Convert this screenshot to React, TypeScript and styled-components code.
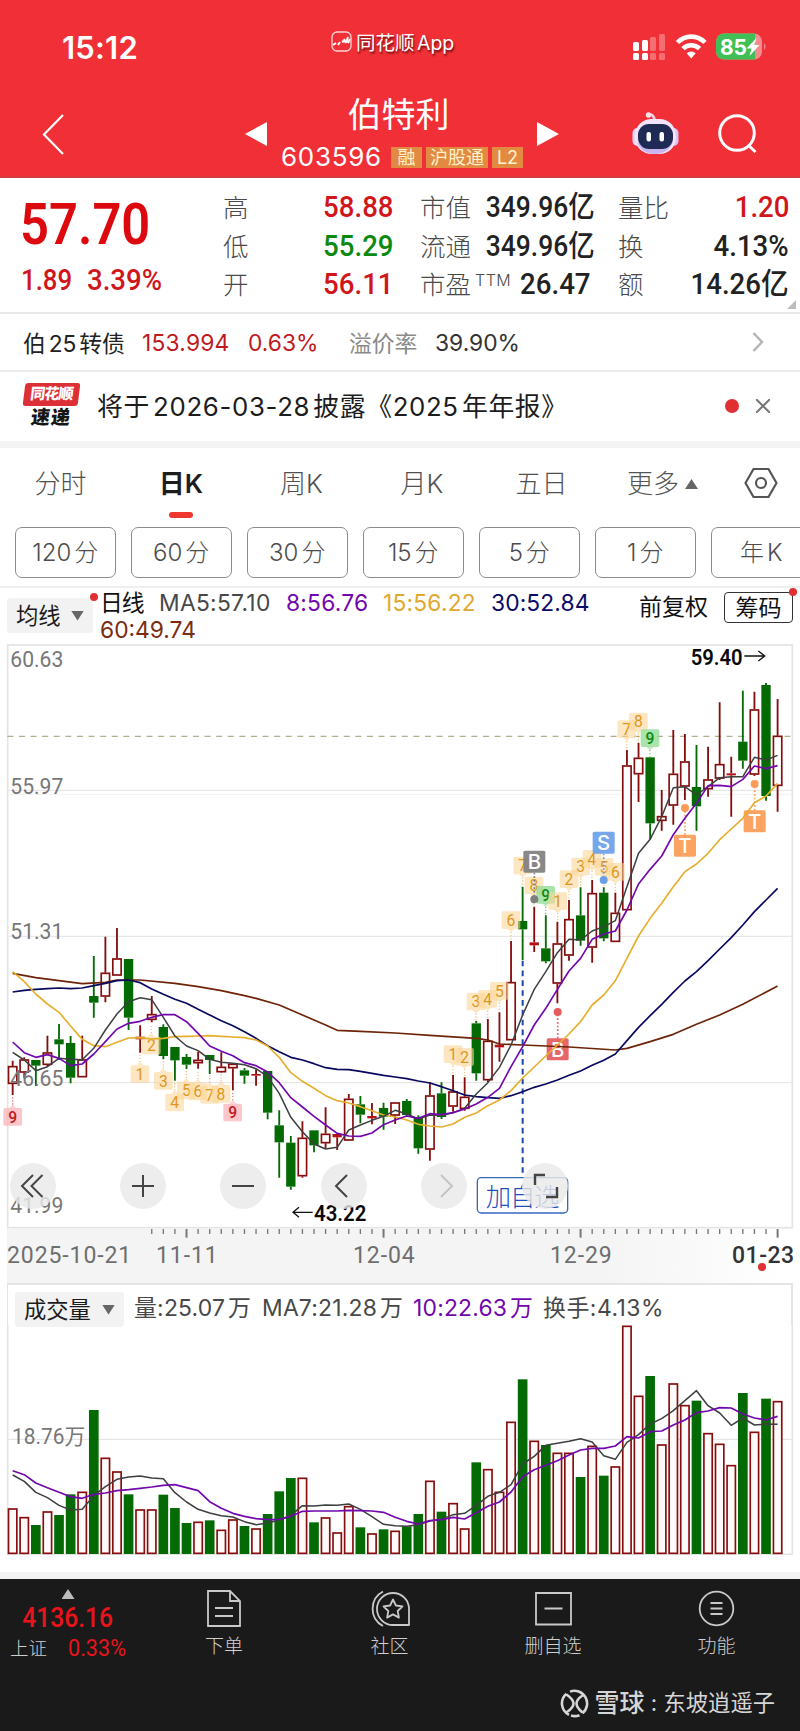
import React from "react";
import styled, { createGlobalStyle } from "styled-components";

const UI = `Inter, "Noto Sans CJK SC", sans-serif`;
const DIN = `Roboto, "Noto Sans CJK SC", sans-serif`;
const RED = "#d0161b";
const UP = "#860d0d";
const DOWN = "#046a04";

const Global = createGlobalStyle`
  * { box-sizing: border-box; }
  body { margin: 0; background: #fff; font-family: ${UI}; color: #222; text-autospace: normal; }
  svg { display: block; flex: none; text-autospace: no-autospace; }
`;

const Page = styled.main`
  width: 800px;
  height: 1731px;
  overflow: hidden;
  display: flex;
  flex-direction: column;
  white-space: nowrap;
`;

/* ---------- header ---------- */
const Header = styled.header`
  height: 178px;
  flex: none;
  background: #f12f36;
  border-bottom: 2px solid #d53a3d;
  color: #fff;
`;
const StatusBar = styled.div`
  height: 92px;
  padding: 4px 34px 0 62px;
  display: grid;
  grid-template-columns: 269px 301px 1fr;
  align-items: center;
`;
const Clock = styled.time`
  font: 600 31px/1 ${UI};
  letter-spacing: 0.2px;
  margin-top: -2px;
`;
const AppName = styled.div`
  display: flex;
  gap: 4px;
  align-items: center;
  margin-top: -13px;
  font-size: 19.5px;
  text-shadow: 1px 2px 2px rgba(70, 0, 0, 0.75);
`;
const NavBar = styled.div`
  height: 84px;
  display: grid;
  grid-template-columns: 245px 36px 248px 103px 113px 1fr;
  align-items: center;
`;
const BackSlot = styled.div`
  padding-left: 42px;
`;
const TitleBlock = styled.div`
  display: flex;
  flex-direction: column;
  height: 84px;
`;
const StockName = styled.h1`
  margin: 0;
  text-align: center;
  width: 235px;
  font: 400 34px/46px ${UI};
`;
const CodeLine = styled.div`
  display: flex;
  align-items: center;
  height: 38px;
  gap: 4px;
`;
const Code = styled.span`
  width: 106px;
  font-size: 26px;
  letter-spacing: 0.7px;
  line-height: 30px;
`;
const Badge = styled.span<{ $w: number }>`
  width: ${(p) => p.$w}px;
  height: 21px;
  margin-top: 1px;
  background: #e28a42;
  color: #fff2cf;
  font-size: 18px;
  line-height: 21px;
  text-align: center;
`;
const SearchSlot = styled.div`
  margin-left: -28px;
`;

/* ---------- quote ---------- */
const Quote = styled.section`
  height: 136px;
  flex: none;
  display: grid;
  grid-template-columns: 223px 171px 26px 171px 27px 171px;
  border-bottom: 2px solid #e7e7e7;
  position: relative;
  text-autospace: no-autospace;
`;
const Din = styled.span<{
  $size: number;
  $weight?: number;
  $color?: string;
  $scale?: number;
  $origin?: string;
  $ls?: number;
}>`
  display: inline-block;
  font-family: ${DIN};
  font-size: ${(p) => p.$size}px;
  font-weight: ${(p) => p.$weight ?? 500};
  letter-spacing: ${(p) => p.$ls ?? 0}px;
  color: ${(p) => p.$color ?? "inherit"};
  line-height: 1;
  transform: scaleX(${(p) => p.$scale ?? 0.92});
  transform-origin: ${(p) => p.$origin ?? "left"} center;
`;
const PriceBlock = styled.div`
  padding: 18px 0 0 20px;
  display: flex;
  flex-direction: column;
  color: #dc0a0e;
`;
const ChangeLine = styled.div`
  display: flex;
  margin-top: 12px;
  padding-left: 1px;
  color: ${RED};
`;
const ChangeAbs = styled.div`
  width: 66px;
`;
const StatColumn = styled.dl`
  margin: 0;
  padding-top: 10px;
`;
const Stat = styled.div`
  height: 38.5px;
  display: flex;
  justify-content: space-between;
  align-items: center;
`;
const StatLabel = styled.dt`
  font: 300 25.5px/38px ${UI};
  padding-top: 2px;
  color: #4a4a4a;
  sup { font-size: 16px; line-height: 0; letter-spacing: 0.5px; vertical-align: 8px; margin-left: 4px; }
`;
const StatValue = styled.dd`
  margin: 0;
  display: flex;
  align-items: center;
`;
const Corner = styled.i`
  position: absolute;
  right: 4px;
  bottom: 3px;
  border-style: solid;
  border-width: 0 0 9px 9px;
  border-color: transparent transparent #bdbdbd;
`;
const Spacer = styled.div``;

/* ---------- bond and news ---------- */
const BondRow = styled.section`
  height: 58px;
  flex: none;
  display: grid;
  grid-template-columns: 119px 106px 101px 86px 317px 1fr;
  align-items: center;
  padding-left: 23px;
  border-bottom: 2px solid #ebebeb;
  font-size: 22.8px;
`;
const Tone = styled.span<{ $c: string; $ls?: number }>`
  color: ${(p) => p.$c};
  letter-spacing: ${(p) => (p.$ls === undefined ? "inherit" : `${p.$ls}px`)};
`;
const NewsRow = styled.section`
  height: 76px;
  flex: none;
  display: grid;
  grid-template-columns: 74px 628px 31px 1fr;
  align-items: center;
  padding: 0 0 2px 23px;
  border-bottom: 7px solid #f3f3f3;
  font-size: 25.8px;
`;
const NewsLogo = styled.div`
  width: 57px;
  display: flex;
  flex-direction: column;
  align-items: center;
  padding-top: 2px;
`;
const LogoTop = styled.span`
  width: 55px;
  height: 23px;
  border-radius: 3px;
  background: #dd3036;
  color: #fff;
  font: 900 15px/22px ${UI};
  letter-spacing: -0.8px;
  text-align: center;
  transform: skewX(-7deg);
`;
const LogoBottom = styled.span`
  color: #151515;
  font: 900 19px/24px ${UI};
  letter-spacing: 1px;
  transform: skewX(-7deg);
`;
const NewsText = styled.span`
  letter-spacing: 0.65px;
  padding-bottom: 3px;
  color: #1c1c1c;
`;
const Dot = styled.i<{ $d: number }>`
  display: block;
  width: ${(p) => p.$d}px;
  height: ${(p) => p.$d}px;
  border-radius: 50%;
  background: #e03034;
`;

/* ---------- period tabs ---------- */
const Tabs = styled.nav`
  height: 79px;
  flex: none;
  display: grid;
  grid-template-columns: 121px 120px 121px 120px 119px 118px 1fr;
  color: #555;
  font-weight: 300;
  font-size: 26px;
  text-autospace: no-autospace;
`;
const Tab = styled.span<{ $on?: boolean }>`
  display: flex;
  flex-direction: column;
  align-items: center;
  line-height: 36px;
  padding-top: 18px;
  font-weight: ${(p) => (p.$on ? 600 : 300)};
  color: ${(p) => (p.$on ? "#1d1d1d" : "#505050")};
  &::after {
    content: "";
    margin-top: 10px;
    width: 24px;
    height: 6px;
    border-radius: 3px;
    background: ${(p) => (p.$on ? "#ee372f" : "transparent")};
  }
`;
const MoreTab = styled.span`
  display: flex;
  gap: 6px;
  height: 54px;
  padding: 18px 0 0 26px;
  line-height: 36px;
`;
const Triangle = styled.i<{ $up?: boolean; $c?: string }>`
  align-self: center;
  width: 13px;
  height: 10px;
  background: ${(p) => p.$c ?? "#666"};
  clip-path: ${(p) => (p.$up ? "polygon(50% 0, 100% 100%, 0 100%)" : "polygon(0 0, 100% 0, 50% 100%)")};
`;
const Settings = styled.span`
  padding: 19px 0 0 25px;
`;
const Periods = styled.div`
  height: 61px;
  flex: none;
  display: flex;
  gap: 15.5px;
  padding-left: 15px;
  overflow: hidden;
  border-bottom: 2px solid #efefef;
`;
const Period = styled.button`
  width: 100.5px;
  height: 50.5px;
  flex: none;
  padding: 2px 0 0;
  border: 1.5px solid #8c8c8c;
  border-radius: 7px;
  background: #fff;
  color: #4d4d4d;
  font: 300 24px/46px ${UI};
`;

/* ---------- moving average legend ---------- */
const Legend = styled.section`
  height: 52px;
  flex: none;
  display: grid;
  grid-template-columns: 86px 546px 85px 69px;
  padding-left: 7px;
  font-size: 22.8px;
`;
const Select = styled.div<{ $w: number; $top: number }>`
  position: relative;
  width: ${(p) => p.$w}px;
  height: 35px;
  margin-top: ${(p) => p.$top}px;
  padding: 0 9px;
  display: flex;
  justify-content: space-between;
  align-items: center;
  border-radius: 4px;
  background: #f2f2f2;
  color: #1c1c1c;
  font: 400 22.3px/35px ${UI};
  letter-spacing: 0;
`;
const CornerDot = styled(Dot)`
  position: absolute;
  right: -5px;
  top: -5px;
`;
const LegendGrid = styled.div`
  display: grid;
  grid-template-columns: 59px 127px 97px 108px 1fr;
  grid-template-rows: 27px 26px;
  padding: 1px 0 0 7px;
  line-height: 27px;
`;
const AdjustMode = styled.span`
  color: #111;
  font-size: 23px;
  line-height: 38px;
`;
const Chips = styled.button`
  position: relative;
  width: 69px;
  height: 31px;
  margin-top: 4px;
  padding: 0;
  border: 1.5px solid #333;
  border-radius: 4px;
  background: #fff;
  color: #111;
  font: 400 23px/26px ${UI};
`;

/* ---------- charts ---------- */
const ChartBox = styled.section`
  height: 589px;
  flex: none;
  position: relative;
`;
const ChartTools = styled.div`
  position: absolute;
  left: 10px;
  top: 523px;
  display: flex;
  gap: 54.4px;
`;
const Tool = styled.button<{ $first?: boolean }>`
  width: 46px;
  height: 46px;
  margin: 0 ${(p) => (p.$first ? 9.6 : 0)}px 0 0;
  padding: 0;
  border: 0;
  border-radius: 50%;
  background: rgba(233, 233, 233, 0.82);
`;
const DateAxis = styled.div`
  height: 54px;
  flex: none;
  display: grid;
  grid-template-columns: 149px 197px 197px 182px 1fr;
  margin: 0 0 0 7px;
  padding-bottom: 2px;
  align-items: center;
  background: linear-gradient(90deg, #f4f4f4 75%, #fff 98%);
  color: #6e6e6e;
  position: relative;
`;
const AxisTicks = styled.svg`
  position: absolute;
  left: -7px;
  top: 0;
`;
const DateDot = styled(Dot)`
  position: absolute;
  right: 34px;
  bottom: 12px;
`;
const VolumeHead = styled.div`
  height: 42px;
  flex: none;
  margin: 0 7px;
  padding-left: 7px;
  display: grid;
  grid-template-columns: 119px 128px 151px 130px 1fr;
  border: solid #e4e4e4;
  border-width: 2px 2px 0 1px;
  line-height: 47px;
  font-size: 22.9px;
  letter-spacing: 0.2px;
  color: #484848;
`;
const BottomBand = styled.div`
  height: 24px;
  flex: none;
  border-bottom: 7px solid #f2f2f2;
`;

/* ---------- footer ---------- */
const Footer = styled.footer`
  flex: 1;
  background: #1a1a1a;
  color: #cfcfcf;
`;
const TabBar = styled.div`
  height: 98px;
  display: grid;
  grid-template-columns: 142px 164px 167px 160px 1fr;
`;
const IndexBlock = styled.div`
  display: flex;
  flex-direction: column;
  align-items: center;
  gap: 5px;
  padding: 10px 6px 0 0;
  color: #e8141b;
`;
const IndexLine = styled.div`
  display: flex;
  align-items: center;
  align-self: stretch;
  padding-left: 10px;
  margin-top: -2px;
  gap: 21px;
`;
const IndexName = styled.span`
  color: #cfcfcf;
  font: 300 18.5px/26px ${UI};
`;
const Action = styled.div`
  display: flex;
  flex-direction: column;
  align-items: center;
  padding-top: 11px;
  gap: 6px;
  font: 300 19px/28px ${UI};
`;
const Watermark = styled.div`
  display: flex;
  justify-content: flex-end;
  align-items: center;
  padding: 9px 25px 0 0;
  font-size: 22.3px;
  line-height: 34px;
  color: #d6d6d6;
`;
const Brand = styled.b`
  font-size: 25px;
  font-weight: 500;
  margin-left: 5px;
`;
const Colon = styled.span`
  width: 19px;
  text-align: center;
`;

/* Chart units: three per pixel, zero on the row 280px below the top of the price panel. */
const STEP = 34.77;
const cx = (i: number) => 38 + i * STEP;

type Candle = [kind: "r" | "g" | "x", high: number, top: number, bottom: number, low: number];
const candles: Candle[] = [
  ["r", 422, 438, 492, 525], ["r", 412, 418, 458, 475], ["g", 420, 420, 437, 498], ["r", 347, 397, 435, 438],
  ["g", 312, 358, 373, 420], ["g", 348, 369, 473, 490], ["r", 347, 418, 472, 472], ["g", 108, 228, 248, 293],
  ["r", 50, 158, 230, 247], ["r", 24, 115, 167, 167], ["g", 117, 117, 293, 330], ["x", 316, 350, 358, 398],
  ["r", 228, 282, 300, 307], ["g", 313, 321, 408, 418], ["g", 381, 381, 421, 482], ["g", 402, 411, 434, 447],
  ["r", 395, 419, 430, 446], ["g", 405, 405, 420, 462], ["r", 397, 440, 457, 458], ["r", 431, 431, 445, 511],
  ["g", 444, 451, 467, 491], ["x", 448, 462, 467, 497], ["g", 453, 453, 578, 598], ["g", 571, 616, 667, 773],
  ["g", 648, 668, 800, 809], ["r", 604, 653, 769, 773], ["g", 631, 631, 676, 697], ["r", 562, 641, 670, 684],
  ["x", 640, 642, 652, 690], ["r", 522, 536, 662, 662], ["g", 528, 553, 584, 610], ["x", 549, 588, 595, 613],
  ["g", 548, 564, 590, 629], ["r", 547, 547, 587, 612], ["g", 537, 543, 585, 590], ["g", 586, 594, 685, 701],
  ["r", 487, 526, 689, 722], ["g", 487, 520, 591, 597], ["r", 465, 514, 560, 575], ["r", 472, 530, 567, 572],
  ["g", 303, 310, 460, 482], ["r", 297, 362, 481, 487], ["x", 277, 374, 382, 425], ["r", 63, 186, 361, 361],
  ["g", -100, 3, 28, 120], ["x", -40, 67, 76, 96], ["g", -14, 85, 124, 130], ["r", 5, 70, 191, 250],
  ["r", -60, -3, 107, 122], ["g", -98, -14, 62, 77], ["r", -120, -81, 83, 128], ["g", -98, -82, 55, 64],
  ["r", -82, -22, 66, 66], ["r", -510, -464, -29, -29], ["r", -532, -487, -437, -354], ["g", -488, -488, -290, -242],
  ["r", -390, -312, -297, -268], ["r", -570, -439, -343, -286], ["r", -558, -476, -400, -360], ["g", -525, -399, -341, -268],
  ["r", -520, -422, -392, -370], ["r", -653, -468, -424, -420], ["x", -490, -440, -434, -310], ["g", -688, -535, -478, -454],
  ["r", -685, -632, -436, -432], ["g", -711, -705, -372, -358], ["r", -663, -553, -402, -325],
];

type Point = [index: number, y: number];
const dense = (ys: number[]): Point[] => ys.map((y, i) => [i, y]);

const ma5 = dense([
  397, 420, 452, 440, 415, 418, 419, 385, 330, 282, 245, 233, 239, 292, 348, 378, 392, 418, 427, 430, 434, 446, 470, 520,
  592, 635, 672, 687, 682, 630, 615, 601, 589, 571, 582, 597, 585, 586, 578, 565, 522, 488, 442, 375, 285, 208, 155, 98,
  58, 60, 33, 20, 2, -100, -200, -242, -310, -397, -400, -375, -400, -427, -430, -430, -488, -480, -494,
]);
const ma8 = dense([
  366, 398, 412, 404, 415, 437, 432, 402, 365, 327, 310, 304, 292, 284, 284, 305, 340, 378, 394, 407, 428, 437, 456, 488,
  533, 561, 589, 615, 640, 648, 649, 639, 614, 600, 588, 595, 581, 584, 578, 567, 552, 532, 505, 440, 380, 315, 265, 208,
  153, 115, 58, 42, 33, -30, -108, -152, -192, -256, -305, -350, -403, -404, -400, -422, -462, -454, -463,
]);
const ma15 = dense([
  155, 185, 222, 252, 277, 318, 358, 377, 380, 367, 354, 353, 357, 355, 350, 349, 348, 347, 349, 351, 353, 360, 378, 412,
  458, 484, 505, 527, 542, 549, 560, 572, 585, 591, 600, 613, 618, 621, 612, 592, 579, 557, 540, 512, 474, 441, 408, 375,
  342, 305, 255, 225, 182, 115, 48, -5, -50, -100, -145, -168, -200, -241, -273, -305, -352, -372, -410,
]);
const ma30 = dense([
  216, 211, 208, 206, 204, 206, 204, 197, 190, 182, 180, 188, 207, 223, 238, 250, 268, 285, 302, 317, 335, 355, 377, 395,
  412, 420, 431, 443, 448, 449, 454, 460, 466, 471, 476, 483, 489, 500, 512, 525, 530, 533, 535, 527, 515, 502, 492, 480,
  466, 453, 436, 421, 402, 362, 322, 287, 253, 217, 183, 155, 122, 87, 53, 15, -25, -60, -95,
]);
const ma60: Point[] = [
  [0, 160], [2, 173], [4, 182], [6, 191], [8, 187], [9, 180], [11, 180], [14, 190], [16, 200], [18, 212], [20, 227],
  [21, 235], [23, 255], [25, 285], [27, 315], [28, 331], [30, 334], [33, 339], [36, 346], [40, 355], [41, 360], [42, 372],
  [44, 375], [48, 381], [52, 390], [53, 385], [55, 365], [57, 343], [59, 313], [61, 285], [63, 253], [66, 198],
];

const toPoints = (pts: Point[]) => pts.map(([i, y]) => `${cx(i).toFixed(1)},${y}`).join(" ");

type Mark = { n: number; x: number; y: number; below?: boolean; tone?: "pink" | "green" };
const marks: Mark[] = [
  { n: 9, x: 38, y: 590, below: true, tone: "pink" }, { n: 1, x: 420, y: 462, below: true },
  { n: 2, x: 454, y: 376, below: true }, { n: 3, x: 490, y: 482, below: true },
  { n: 4, x: 524, y: 547, below: true }, { n: 5, x: 559, y: 511, below: true },
  { n: 6, x: 594, y: 514, below: true }, { n: 7, x: 629, y: 524, below: true },
  { n: 8, x: 663, y: 521, below: true }, { n: 9, x: 698, y: 577, below: true, tone: "pink" },
  { n: 1, x: 1359, y: 402 }, { n: 2, x: 1394, y: 410 }, { n: 3, x: 1428, y: 244 }, { n: 4, x: 1463, y: 236 },
  { n: 5, x: 1498, y: 212 }, { n: 6, x: 1533, y: 0 }, { n: 7, x: 1568, y: -164 }, { n: 8, x: 1602, y: -104 },
  { n: 9, x: 1637, y: -76, tone: "green" }, { n: 1, x: 1673, y: -57 }, { n: 2, x: 1707, y: -123 },
  { n: 3, x: 1742, y: -161 }, { n: 4, x: 1776, y: -184 }, { n: 5, x: 1812, y: -160 }, { n: 6, x: 1846, y: -145 },
  { n: 7, x: 1880, y: -573 }, { n: 8, x: 1915, y: -596 }, { n: 9, x: 1950, y: -546, tone: "green" },
];
const markFill = { pink: "#fbb3b8", green: "#8ddb92", plain: "#fbd596" };
const markText = { pink: "#c11a20", green: "#0c8a10", plain: "#e0961d" };

type Signal = { t: string; x: number; y: number; dotY: number; c: string };
const signals: Signal[] = [
  { t: "B", x: 1603, y: -175, dotY: -62, c: "#7f7f7f" },
  { t: "S", x: 1811, y: -232, dotY: -120, c: "#6a9fe8" },
  { t: "T", x: 2055, y: -223, dotY: -336, c: "#fb9b55" },
  { t: "T", x: 2264, y: -296, dotY: -408, c: "#fb9b55" },
  { t: "B", x: 1673, y: 388, dotY: 276, c: "#e55a5c" },
];

const CandleMark = ({ c, i }: { c: Candle; i: number }) => {
  const [kind, high, top, bottom, low] = c;
  const x = cx(i);
  const line = kind === "g" ? DOWN : UP;
  const hollow = kind === "r";
  return (
    <g stroke={line} strokeWidth={5.5}>
      <path d={`M${x} ${high}V${top}M${x} ${bottom}V${low}`} />
      {hollow ? (
        <rect x={x - 12.5} y={top + 2} width={25} height={Math.max(bottom - top - 4, 3)} fill="#fff" strokeWidth={5} />
      ) : (
        <rect x={x - 14} y={top} width={28} height={bottom - top} fill={kind === "x" ? "#b31217" : DOWN} stroke="none" />
      )}
    </g>
  );
};

const PriceChart = () => (
  <svg width="800" height="589" viewBox="0 -840 2400 1767" fontFamily={DIN}>
    <rect x="23" y="-825" width="2354" height="1748" fill="#fff" stroke="#e4e4e4" strokeWidth="5" />
    <g stroke="#e2e2e2" strokeWidth="3">
      <path d="M25 -389H2375M25 49H2375M25 488H2375" />
      <path d="M25 -377H2375" stroke="#f1f1f1" />
    </g>
    <path d="M22 -551H2375" stroke="#aeb08e" strokeWidth="4" strokeDasharray="18 16.8" />
    {candles.map((c, i) => <CandleMark key={i} c={c} i={i} />)}
    <g fill="#777" fontSize="66">
      <text x="31" y="-758" textLength="159" lengthAdjust="spacingAndGlyphs">60.63</text>
      <text x="31" y="-378" textLength="159" lengthAdjust="spacingAndGlyphs">55.97</text>
      <text x="31" y="58" textLength="159" lengthAdjust="spacingAndGlyphs">51.31</text>
      <text x="31" y="498" textLength="159" lengthAdjust="spacingAndGlyphs">46.65</text>
      <text x="31" y="878" textLength="159" lengthAdjust="spacingAndGlyphs">41.99</text>
    </g>
    {marks.map((m, k) => {
      const tone = m.tone ?? "plain";
      const tip = m.below ? -1 : 1;
      return (
        <g key={k} textAnchor="middle">
          <path
            d={`M${m.x - 11} ${m.y + tip * 26}L${m.x} ${m.y + tip * 36}L${m.x + 11} ${m.y + tip * 26}Z`}
            fill={markFill[tone]} fillOpacity=".6"
          />
          <rect x={m.x - 28} y={m.y - 26} width="56" height="53" rx="5" fill={markFill[tone]} fillOpacity={m.tone ? 0.75 : 0.58} />
          <path d={`M${m.x} ${m.y + tip * 36}v${tip * 24}`} stroke={markText[tone]} strokeOpacity=".5" strokeWidth="4" strokeDasharray="4 5" />
          <text x={m.x} y={m.y + 18} fontSize="47" fontWeight={m.tone ? 500 : 400} fill={markText[tone]}>{m.n}</text>
        </g>
      );
    })}
    {signals.map((s, k) => (
      <g key={k} textAnchor="middle">
        <path d={`M${s.x} ${s.y}V${s.dotY}`} stroke={s.c} strokeWidth="5" strokeDasharray="5 6" />
        <circle cx={s.x} cy={s.dotY} r="12" fill={s.c} />
        <rect x={s.x - 33} y={s.y - 33} width="66" height="66" rx="5" fill={s.c} fillOpacity=".92" />
        <text x={s.x} y={s.y + 22} fontFamily={UI} fontSize="61" fontWeight="500" fill="#fff">{s.t}</text>
      </g>
    ))}
    <path d="M1568 122V773" stroke="#1c48a8" strokeWidth="6" strokeDasharray="17 12.5" />
    <g fill="none" strokeLinejoin="round">
      <polyline points={toPoints(ma60)} stroke="#6e2408" strokeWidth="5" />
      <polyline points={toPoints(ma30)} stroke="#08085e" strokeWidth="5" />
      <polyline points={toPoints(ma15)} stroke="#e6ae2c" strokeWidth="5" />
      <polyline points={toPoints(ma5)} stroke="#3d3f40" strokeWidth="4.5" />
      <polyline points={toPoints(ma8)} stroke="#7207ad" strokeWidth="5" />
    </g>
    <rect x="1432" y="773" width="271" height="106" rx="12" fill="#fff" stroke="#3568bd" strokeWidth="4" />
    <text x="1568" y="857" fontSize="76" textAnchor="middle" fill="#1f50b8" fontWeight="300" textLength="222">加自选</text>
    <g fill="#0a0a0a" fontSize="66" fontWeight="600">
      <text x="2072" y="-766" textLength="156" lengthAdjust="spacingAndGlyphs">59.40</text>
      <text x="942" y="902" textLength="157" lengthAdjust="spacingAndGlyphs">43.22</text>
    </g>
    <path d="M2233 -792H2293M2275 -807L2294 -792L2275 -777M938 877H880M897 862L879 877L897 892" fill="none" stroke="#111" strokeWidth="4" />
  </svg>
);

const volumes = [
  703, 729, 753, 712, 723, 661, 653, 408, 551, 592, 661, 706, 706, 662, 702, 747, 743, 739, 767, 736, 756, 763, 720, 652,
  612, 611, 745, 730, 775, 696, 760, 778, 766, 770, 757, 720, 620, 713, 687, 763, 565, 585, 653, 443, 316, 500, 513, 536,
  536, 609, 515, 605, 577, 155, 365, 306, 511, 328, 393, 380, 477, 509, 573, 357, 473, 374, 381,
];
const volMa7 = dense([
  603, 622, 655, 671, 694, 708, 706, 665, 638, 616, 609, 606, 612, 614, 656, 684, 706, 717, 725, 729, 743, 752, 747, 738,
  724, 695, 696, 693, 694, 690, 706, 728, 751, 755, 757, 752, 741, 736, 722, 718, 694, 667, 655, 632, 570, 547, 514, 508,
  502, 494, 504, 545, 556, 505, 482, 450, 434, 410, 380, 350, 395, 417, 454, 432, 453, 450, 451,
]);
const volMa10 = dense([
  590, 602, 627, 641, 655, 668, 673, 661, 657, 650, 647, 643, 639, 634, 632, 641, 650, 683, 703, 718, 727, 734, 737, 736,
  727, 712, 711, 711, 711, 709, 710, 711, 715, 730, 742, 750, 740, 737, 730, 735, 716, 697, 684, 654, 608, 587, 574, 560,
  543, 528, 523, 523, 516, 488, 492, 473, 471, 453, 438, 416, 411, 401, 402, 420, 432, 438, 427,
]);

const VolumeChart = () => (
  <svg width="800" height="230" viewBox="0 153 2400 690">
    <path d="M23 150V841H2377V150" fill="none" stroke="#e4e4e4" strokeWidth="5" />
    <path d="M25 496H2375" stroke="#e0e0e0" strokeWidth="3" />
    <text x="36" y="510" fontFamily={DIN} fontSize="66" fill="#777" textLength="220" lengthAdjust="spacingAndGlyphs">18.76万</text>
    {volumes.map((top, i) =>
      candles[i][0] === "g" ? (
        <rect key={i} x={cx(i) - 14.5} y={top} width={29} height={840 - top} fill={DOWN} />
      ) : (
        <rect key={i} x={cx(i) - 12.5} y={top + 2} width={25} height={836 - top} fill="#fffafa" stroke={UP} strokeWidth={5} />
      )
    )}
    <g fill="none" strokeLinejoin="round">
      <polyline points={toPoints(volMa7)} stroke="#3d3f40" strokeWidth="4.5" />
      <polyline points={toPoints(volMa10)} stroke="#7207ad" strokeWidth="5" />
    </g>
  </svg>
);

const StatusIcons = () => (
  <svg width="136" height="34" viewBox="0 0 136 34">
    <g fill="#fff">
      <rect x="1" y="11" width="6" height="9" rx="1.5" />
      <rect x="10" y="9" width="6" height="11" rx="1.5" />
      <rect x="1" y="22" width="6" height="7" rx="1.5" />
      <rect x="10" y="22" width="6" height="7" rx="1.5" />
      <g opacity=".3">
        <rect x="18" y="6" width="6" height="14" rx="1.5" />
        <rect x="27" y="3" width="6" height="17" rx="1.5" />
        <rect x="18" y="22" width="6" height="7" rx="1.5" />
        <rect x="27" y="22" width="6" height="7" rx="1.5" />
      </g>
    </g>
    <g fill="none" stroke="#fff" strokeWidth="4.6">
      <path d="M45.5 11.5a19 19 0 0 1 27.5 0" />
      <path d="M51 17.7a11.5 11.5 0 0 1 16.5 0" />
    </g>
    <path d="M54.7 22.3a6.5 6.5 0 0 1 9 0L59.2 27.5z" fill="#fff" />
    <rect x="84" y="2.5" width="46" height="26" rx="8" fill="#f58b90" />
    <path d="M92 2.5h31v26h-31a8 8 0 0 1-8-8v-10a8 8 0 0 1 8-8z" fill="#3fbf55" />
    <path d="M132 12q3 3.5 0 7z" fill="#f58b90" />
    <text x="88" y="23.5" fontFamily={UI} fontWeight="700" fontSize="22" textLength="27" lengthAdjust="spacingAndGlyphs" fill="#fff">85</text>
    <path d="M124.5 7L114.5 17.5h5L117.5 25l10-11h-5.2z" fill="#fff" />
  </svg>
);

const AppGlyph = () => (
  <svg width="21" height="22" viewBox="0 0 21 22" fill="none" stroke="#fff">
    <rect x="1" y="1" width="19" height="19" rx="5" strokeWidth="1.3" opacity=".8" />
    <path d="M2 14l3-2M7 14l2-3M11 11l2-1M15 12l2-6M17 12l2-4M13 8l2 4" strokeWidth="2" />
  </svg>
);

const Robot = () => (
  <svg width="48" height="44" viewBox="0 0 48 44">
    <path d="M16.5 3q5-1.5 6 5" fill="none" stroke="#f6cfe0" strokeWidth="2.8" />
    <circle cx="16.5" cy="3" r="2.7" fill="#fbe3ea" />
    <rect x="0.5" y="16" width="10" height="18" rx="5" fill="#e7d5f8" />
    <rect x="36.5" y="16" width="10" height="18" rx="5" fill="#d9c6f6" />
    <rect x="3" y="7" width="41" height="35" rx="16.5" fill="#f1e4fb" />
    <path d="M5 30q5 12 18 12t18-12q-7 7-18 7T5 30z" fill="#c9b4f0" />
    <rect x="6" y="12" width="35" height="25" rx="11" fill="#1f2a55" />
    <rect x="14.5" y="20" width="4.5" height="9.5" rx="2" fill="#fff" />
    <rect x="27.5" y="20" width="4.5" height="9.5" rx="2" fill="#fff" />
  </svg>
);

export default function App() {
  return (
    <Page>
      <Global />
      <Header>
        <StatusBar>
          <Clock>15:12</Clock>
          <AppName><AppGlyph />同花顺App</AppName>
          <StatusIcons />
        </StatusBar>
        <NavBar>
          <BackSlot>
            <svg width="24" height="44" viewBox="0 0 24 44" fill="none" stroke="#fff" strokeWidth="2.2"><path d="M21 3L2 22.5L21 42" /></svg>
          </BackSlot>
          <svg width="22" height="24" viewBox="0 0 22 24" fill="#fff"><path d="M22 0v24L0 12z" /></svg>
          <TitleBlock>
            <StockName>伯特利</StockName>
            <CodeLine>
              <Code>603596</Code>
              <Badge $w={31}>融</Badge>
              <Badge $w={62}>沪股通</Badge>
              <Badge $w={31}>L2</Badge>
            </CodeLine>
          </TitleBlock>
          <svg width="30" height="24" viewBox="0 0 30 24" fill="#fff"><path d="M8 0v24l22-12z" /></svg>
          <Robot />
          <SearchSlot>
            <svg width="44" height="44" viewBox="0 0 44 44" fill="none" stroke="#fff" strokeWidth="3">
              <circle cx="20" cy="21" r="17.3" />
              <path d="M31 33l7.5 7" />
            </svg>
          </SearchSlot>
        </NavBar>
      </Header>

      <Quote>
        <PriceBlock>
          <Din $size={57} $scale={0.89} $weight={600}>57.70</Din>
          <ChangeLine>
            <ChangeAbs><Din $size={30} $scale={0.86}>1.89</Din></ChangeAbs>
            <Din $size={30}>3.39%</Din>
          </ChangeLine>
        </PriceBlock>
        <StatColumn>
          <Stat><StatLabel>高</StatLabel><StatValue><Din $size={30} $color={RED} $origin="right">58.88</Din></StatValue></Stat>
          <Stat><StatLabel>低</StatLabel><StatValue><Din $size={30} $color="#0c8a10" $origin="right">55.29</Din></StatValue></Stat>
          <Stat><StatLabel>开</StatLabel><StatValue><Din $size={30} $color={RED} $origin="right">56.11</Din></StatValue></Stat>
        </StatColumn>
        <Spacer />
        <StatColumn>
          <Stat><StatLabel>市值</StatLabel><StatValue><Din $size={30} $scale={0.88} $origin="right">349.96亿</Din></StatValue></Stat>
          <Stat><StatLabel>流通</StatLabel><StatValue><Din $size={30} $scale={0.88} $origin="right">349.96亿</Din></StatValue></Stat>
          <Stat><StatLabel>市盈<sup>TTM</sup></StatLabel><StatValue><Din $size={30} $origin="right">26.47</Din></StatValue></Stat>
        </StatColumn>
        <Spacer />
        <StatColumn>
          <Stat><StatLabel>量比</StatLabel><StatValue><Din $size={30} $color={RED} $origin="right">1.20</Din></StatValue></Stat>
          <Stat><StatLabel>换</StatLabel><StatValue><Din $size={30} $origin="right">4.13%</Din></StatValue></Stat>
          <Stat><StatLabel>额</StatLabel><StatValue><Din $size={30} $origin="right">14.26亿</Din></StatValue></Stat>
        </StatColumn>
        <Corner />
      </Quote>

      <BondRow>
        <span>伯25转债</span>
        <Tone $c="#c01a1e" $ls={0.2}>153.994</Tone>
        <Tone $c="#c01a1e">0.63%</Tone>
        <Tone $c="#8a8a8a">溢价率</Tone>
        <Tone $c="#333">39.90%</Tone>
        <svg width="12" height="20" viewBox="0 0 12 20" fill="none" stroke="#b5b5b5" strokeWidth="2.5"><path d="M1.5 1l8.5 9-8.5 9" /></svg>
      </BondRow>

      <NewsRow>
        <NewsLogo><LogoTop>同花顺</LogoTop><LogoBottom>速递</LogoBottom></NewsLogo>
        <NewsText>将于2026-03-28披露《2025年年报》</NewsText>
        <Dot $d={14} />
        <svg width="14" height="14" viewBox="0 0 14 14" stroke="#777" strokeWidth="2"><path d="M0 0l14 14M14 0L0 14" /></svg>
      </NewsRow>

      <Tabs>
        <Tab>分时</Tab>
        <Tab $on>日K</Tab>
        <Tab>周K</Tab>
        <Tab>月K</Tab>
        <Tab>五日</Tab>
        <MoreTab>更多<Triangle $up /></MoreTab>
        <Settings>
          <svg width="34" height="32" viewBox="0 0 34 32" fill="none" stroke="#555" strokeWidth="2.2" strokeLinejoin="round">
            <path d="M9.5 2h15L32.5 16l-8 14h-15L1.5 16z" />
            <circle cx="17" cy="16" r="5" />
          </svg>
        </Settings>
      </Tabs>
      <Periods>
        {["120分", "60分", "30分", "15分", "5分", "1分", "年K"].map((p) => <Period key={p}>{p}</Period>)}
      </Periods>

      <Legend>
        <Select $w={86} $top={10}>均线<Triangle /><CornerDot $d={8} /></Select>
        <LegendGrid>
          <Tone $c="#111" $ls={-1}>日线</Tone>
          <Tone $c="#484848" $ls={0.3}>MA5:57.10</Tone>
          <Tone $c="#7207ad" $ls={0.2}>8:56.76</Tone>
          <Tone $c="#e0a92e" $ls={0.2}>15:56.22</Tone>
          <Tone $c="#0b0b68" $ls={0.1}>30:52.84</Tone>
          <Tone $c="#7b2c10">60:49.74</Tone>
        </LegendGrid>
        <AdjustMode>前复权</AdjustMode>
        <Chips>筹码<CornerDot $d={8} /></Chips>
      </Legend>

      <ChartBox>
        <PriceChart />
        <ChartTools>
          <Tool $first><svg width="46" height="46" viewBox="0 0 46 46" fill="none" stroke="#444" strokeWidth="2"><path d="M23 12L12 23l11 11M32.5 12l-11 11 11 11" /></svg></Tool>
          <Tool><svg width="46" height="46" viewBox="0 0 46 46" stroke="#444" strokeWidth="2"><path d="M12 23h22M23 12v22" /></svg></Tool>
          <Tool><svg width="46" height="46" viewBox="0 0 46 46" stroke="#444" strokeWidth="2"><path d="M12 23h22" /></svg></Tool>
          <Tool><svg width="46" height="46" viewBox="0 0 46 46" fill="none" stroke="#444" strokeWidth="2"><path d="M26 12L15 23l11 11" /></svg></Tool>
          <Tool><svg width="46" height="46" viewBox="0 0 46 46" fill="none" stroke="#c4c4c4" strokeWidth="2"><path d="M20 12l11 11-11 11" /></svg></Tool>
          <Tool><svg width="46" height="46" viewBox="0 0 46 46" fill="none" stroke="#444" strokeWidth="2.4"><path d="M13 22v-10h10M24 34h11v-10" /></svg></Tool>
        </ChartTools>
      </ChartBox>

      <DateAxis>
        <AxisTicks width="800" height="12" viewBox="0 0 2400 36">
          {candles.map((_, i) =>
            i < 12 ? null : (
              <path key={i} d={`M${cx(i)} 0v${(i - 15) % 17 === 0 ? 26 : 15}`} stroke="#777" strokeWidth={(i - 15) % 17 === 0 ? 6 : 4} />
            )
          )}
        </AxisTicks>
        <Din $size={23} $weight={400} $scale={1} $ls={0.9}>2025-10-21</Din>
        <Din $size={23} $weight={400} $scale={1} $ls={0.9}>11-11</Din>
        <Din $size={23} $weight={400} $scale={1} $ls={0.9}>12-04</Din>
        <Din $size={23} $weight={400} $scale={1} $ls={0.9}>12-29</Din>
        <Din $size={23} $weight={500} $scale={1} $ls={0.5} $color="#333">01-23</Din>
        <DateDot $d={8} />
      </DateAxis>

      <VolumeHead>
        <Select $w={109} $top={7}>成交量<Triangle /></Select>
        <span>量:25.07万</span>
        <span>MA7:21.28万</span>
        <Tone $c="#7207ad">10:22.63万</Tone>
        <Tone $c="#484848" $ls={0.5}>换手:4.13%</Tone>
      </VolumeHead>
      <VolumeChart />
      <BottomBand />

      <Footer>
        <TabBar>
          <IndexBlock>
            <Triangle $up $c="#bbb" />
            <Din $size={28} $weight={500} $scale={0.88} $origin="center">4136.16</Din>
            <IndexLine><IndexName>上证</IndexName><Din $size={23} $weight={400} $scale={0.94}>0.33%</Din></IndexLine>
          </IndexBlock>
          <Action>
            <svg width="34" height="37" viewBox="0 0 34 37" fill="none" stroke="#c9c9c9" strokeWidth="1.8"><path d="M1 1h22l10 10v25H1zM23 1v10h10M8 18h18M8 26h18" /></svg>
            下单
          </Action>
          <Action>
            <svg width="40" height="37" viewBox="0 0 40 37" fill="none" stroke="#c9c9c9" strokeWidth="1.8" strokeLinejoin="round">
              <path d="M39 35H23A16 16 0 1 1 39 19zM13 1.5A19.5 19.5 0 0 0 13 36M23 9.5l2.9 6 6.6.9-4.8 4.6 1.2 6.6-5.9-3.2-5.9 3.2 1.2-6.6-4.8-4.6 6.6-.9z" />
            </svg>
            社区
          </Action>
          <Action>
            <svg width="37" height="37" viewBox="0 0 37 37" fill="none" stroke="#c9c9c9" strokeWidth="1.8"><path d="M1 3h35v31.5H1zM9.5 18.5h18" /></svg>
            删自选
          </Action>
          <Action>
            <svg width="37" height="37" viewBox="0 0 37 37" fill="none" stroke="#c9c9c9" strokeWidth="1.8"><circle cx="18.5" cy="18.5" r="16.8" /><path d="M12.5 13h12M12.5 18.5h12M12.5 24h12" /></svg>
            功能
          </Action>
        </TabBar>
        <Watermark>
          <svg width="29" height="29" viewBox="0 0 29 29" fill="none" stroke="#d6d6d6" strokeWidth="2.6">
            <path d="M9 25.8A12.7 12.7 0 0 1 6.5 4.7M10 2.6A12.7 12.7 0 0 1 22.5 24.3M19.5 26.2A12.7 12.7 0 0 1 11 26.6M6.5 5.5q7 5 7 9t-6.5 8.5M22.5 6.5q-6 4-6 8t6 9" />
          </svg>
          <Brand>雪球</Brand>
          <Colon>:</Colon>
          <span>东坡逍遥子</span>
        </Watermark>
      </Footer>
    </Page>
  );
}
